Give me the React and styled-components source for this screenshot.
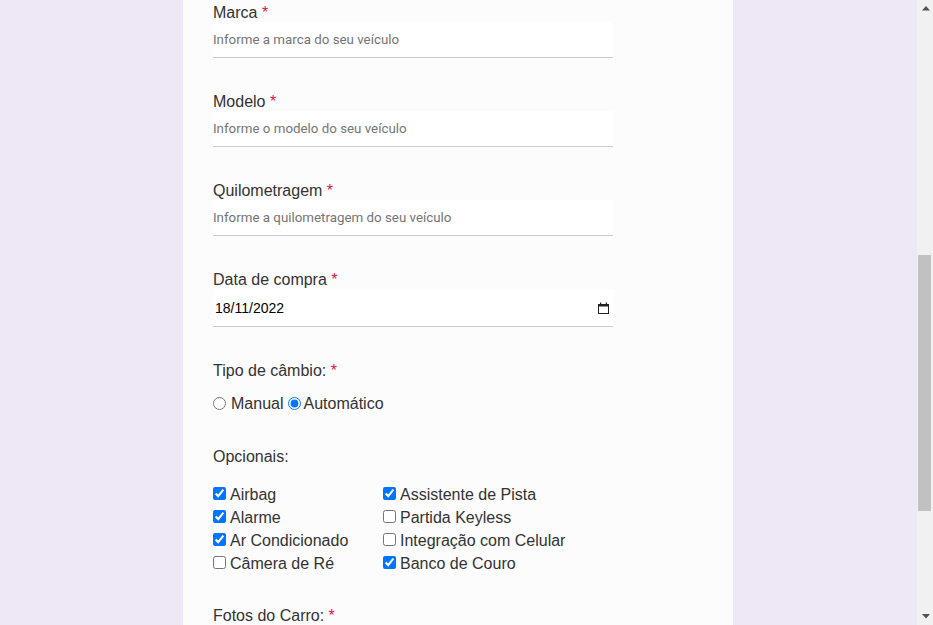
import React, { useLayoutEffect, useRef, useState } from 'react';
import styled, { createGlobalStyle } from 'styled-components';

const GlobalStyle = createGlobalStyle`
  html, body {
    margin: 0;
    height: 100%;
    overflow: hidden;
  }
  body {
    background: #ede7f6;
    font-family: 'Liberation Sans', Arial, sans-serif;
    color: #333;
  }
`;

const Viewport = styled.div`
  display: flex;
  height: 100vh;
`;

const ScrollArea = styled.div`
  flex: 1;
  overflow: hidden;
`;

const ScrollBar = styled.div`
  display: flex;
  flex-direction: column;
  width: 16px;
  background: #f1f1f1;
`;

const ArrowButton = styled.div`
  display: flex;
  align-items: center;
  justify-content: center;
  height: 17px;
  padding-left: 1px;
`;

const Track = styled.div`
  flex: 1;
`;

const Thumb = styled.div`
  margin: 0 2px 0 1px;
  background: #c1c1c1;
`;

const Page = styled.div`
  display: flex;
  justify-content: center;
  padding-right: 1px;
`;

const Card = styled.form`
  width: 550px;
  box-sizing: border-box;
  padding: 40px 30px 20px;
  background: #fcfcfc;
`;

const Title = styled.h1`
  margin: 0 0 8px;
  font-size: 26px;
  line-height: 32px;
  font-weight: 700;
  color: #333;
`;

const Subtitle = styled.p`
  margin: 0 0 40px;
  font-size: 15px;
  line-height: 19px;
  color: #666;
`;

const Field = styled.div`
  margin-bottom: ${(p) => p.$gap || 34}px;
`;

const Label = styled.label`
  display: block;
  font-size: 16px;
  line-height: 19px;
  color: #333;
`;

const Required = styled.span`
  color: crimson;
`;

const TextInput = styled.input`
  display: block;
  width: 400px;
  height: 36px;
  box-sizing: border-box;
  padding: 0;
  border: 0;
  border-bottom: 1px solid #ccc;
  background: #fff;
  font-family: Roboto, 'Liberation Sans', sans-serif;
  font-size: 13.33px;
  color: #333;
  outline: none;

  &::placeholder {
    color: #757575;
  }
`;

const TextArea = styled.textarea`
  display: block;
  width: 400px;
  height: 60px;
  box-sizing: border-box;
  padding: 6px 0;
  border: 0;
  border-bottom: 1px solid #ccc;
  background: #fff;
  font-family: Roboto, 'Liberation Sans', sans-serif;
  font-size: 13px;
  resize: none;
  outline: none;
`;

const DateBox = styled.div`
  display: flex;
  align-items: center;
  width: 400px;
  height: 38px;
  box-sizing: border-box;
  padding: 0 3px 0 2px;
  background: #fff;
  border-bottom: 1px solid #ccc;
`;

const DateValue = styled.input`
  flex: 1;
  min-width: 0;
  padding: 0;
  border: 0;
  background: transparent;
  font-family: 'Liberation Sans', Arial, sans-serif;
  font-size: 14px;
  color: #000;
  outline: none;
`;

const RadioRow = styled.div`
  display: flex;
  align-items: center;
  height: 19px;
  margin-top: 14px;
  font-size: 16px;
  color: #333;
`;

const Radio = styled.input.attrs({ type: 'radio' })`
  width: 13px;
  height: 13px;
  margin: 0 ${(p) => p.$right}px 0 ${(p) => p.$left}px;
`;

const OptionsGrid = styled.div`
  display: grid;
  grid-template-columns: 170px 170px;
  grid-auto-rows: 23px;
  margin-top: 17px;
`;

const Option = styled.label`
  display: flex;
  align-items: center;
  font-size: 16px;
  color: #333;
  white-space: nowrap;
`;

const Checkbox = styled.input.attrs({ type: 'checkbox' })`
  width: 13px;
  height: 13px;
  margin: 0 4px 3px 0;
`;

const FileInput = styled.input`
  display: block;
  margin-top: 8px;
  font-family: 'Liberation Sans', Arial, sans-serif;
  font-size: 13px;
`;

const SubmitButton = styled.button`
  display: block;
  width: 400px;
  height: 40px;
  border: 0;
  border-radius: 4px;
  background: #673ab7;
  color: #fff;
  font-family: 'Liberation Sans', Arial, sans-serif;
  font-size: 16px;
`;

const CalendarIcon = () => (
  <svg width="12" height="12" viewBox="0 0 12 12" aria-hidden="true">
    <rect x="0.5" y="2.5" width="10" height="9" fill="none" stroke="#222" strokeWidth="1" />
    <rect x="0" y="2" width="11" height="2.5" fill="#222" />
    <rect x="2" y="0.5" width="1.2" height="2" fill="#222" />
    <rect x="7.8" y="0.5" width="1.2" height="2" fill="#222" />
  </svg>
);

const Arrow = ({ down }) => (
  <svg width="8" height="5" viewBox="0 0 8 5" aria-hidden="true">
    <path d={down ? 'M0 0 H8 L4 4.5 Z' : 'M0 4.5 H8 L4 0 Z'} fill="#505050" />
  </svg>
);

const topFields = [
  ['Nome', 'Informe o seu nome completo'],
  ['E-mail', 'Informe o seu e-mail'],
  ['Telefone', 'Informe o seu telefone'],
  ['Cidade', 'Informe a sua cidade'],
  ['Placa', 'Informe a placa do seu veículo'],
];

const vehicleFields = [
  ['Marca', 'Informe a marca do seu veículo'],
  ['Modelo', 'Informe o modelo do seu veículo'],
  ['Quilometragem', 'Informe a quilometragem do seu veículo'],
];

const opcionais = [
  ['Airbag', true],
  ['Assistente de Pista', true],
  ['Alarme', true],
  ['Partida Keyless', false],
  ['Ar Condicionado', true],
  ['Integração com Celular', false],
  ['Câmera de Ré', false],
  ['Banco de Couro', true],
];

const App = () => {
  const areaRef = useRef(null);
  const trackRef = useRef(null);
  const marcaRef = useRef(null);
  const [thumb, setThumb] = useState({ top: 0, height: 0 });

  useLayoutEffect(() => {
    const area = areaRef.current;
    const marca = marcaRef.current;
    if (!area || !marca) return;
    area.scrollTop += marca.getBoundingClientRect().top - area.getBoundingClientRect().top - 3;
    const trackH = trackRef.current.clientHeight;
    const height = Math.round((trackH * area.clientHeight) / area.scrollHeight);
    const range = area.scrollHeight - area.clientHeight;
    const top = range > 0 ? Math.round(((trackH - height) * area.scrollTop) / range) : 0;
    setThumb({ top, height });
  }, []);

  return (
    <>
      <GlobalStyle />
      <Viewport>
        <ScrollArea ref={areaRef}>
          <Page>
            <Card onSubmit={(e) => e.preventDefault()}>
              <Title>Anuncie seu carro</Title>
              <Subtitle>Preencha os dados abaixo para cadastrar o seu veículo.</Subtitle>

              {topFields.map(([label, placeholder]) => (
                <Field key={label}>
                  <Label>
                    {label} <Required>*</Required>
                  </Label>
                  <TextInput placeholder={placeholder} />
                </Field>
              ))}

              {vehicleFields.map(([label, placeholder], i) => (
                <Field key={label} ref={i === 0 ? marcaRef : undefined}>
                  <Label>
                    {label} <Required>*</Required>
                  </Label>
                  <TextInput placeholder={placeholder} />
                </Field>
              ))}

              <Field>
                <Label>
                  Data de compra <Required>*</Required>
                </Label>
                <DateBox>
                  <DateValue defaultValue="18/11/2022" readOnly />
                  <CalendarIcon />
                </DateBox>
              </Field>

              <Field>
                <Label>
                  Tipo de câmbio: <Required>*</Required>
                </Label>
                <RadioRow>
                  <Radio name="cambio" $left={0} $right={5} />
                  Manual
                  <Radio name="cambio" $left={5} $right={2} defaultChecked />
                  Automático
                </RadioRow>
              </Field>

              <Field $gap={31}>
                <Label>Opcionais:</Label>
                <OptionsGrid>
                  {opcionais.map(([name, checked]) => (
                    <Option key={name}>
                      <Checkbox defaultChecked={checked} />
                      {name}
                    </Option>
                  ))}
                </OptionsGrid>
              </Field>

              <Field>
                <Label>
                  Fotos do Carro: <Required>*</Required>
                </Label>
                <FileInput type="file" multiple />
              </Field>

              <Field>
                <Label>Observações</Label>
                <TextArea />
              </Field>

              <SubmitButton type="submit">Enviar</SubmitButton>
            </Card>
          </Page>
        </ScrollArea>
        <ScrollBar>
          <ArrowButton>
            <Arrow />
          </ArrowButton>
          <Track ref={trackRef}>
            <Thumb style={{ marginTop: thumb.top, height: thumb.height }} />
          </Track>
          <ArrowButton>
            <Arrow down />
          </ArrowButton>
        </ScrollBar>
      </Viewport>
    </>
  );
};

export default App;
